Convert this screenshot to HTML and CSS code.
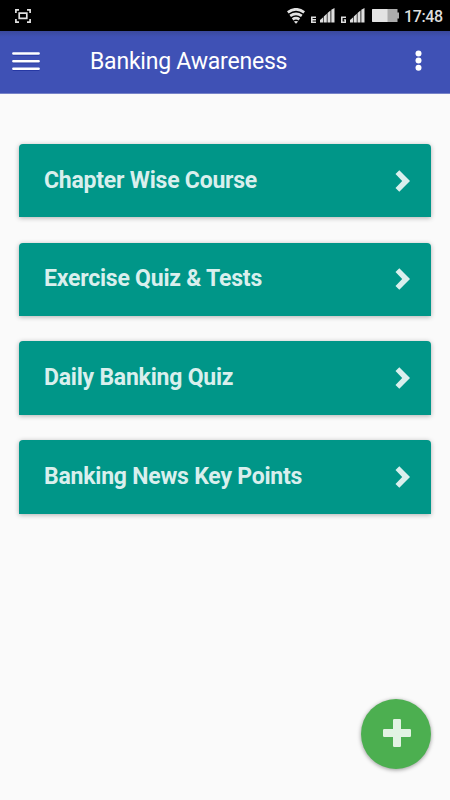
FILE: index.html
```html
<!DOCTYPE html>
<html lang="en">
<head>
<meta charset="utf-8">
<title>Banking Awareness</title>
<link rel="stylesheet" href="styles.css">
</head>
<body>
<div class="status">
  <svg class="shot" width="16" height="14" viewBox="0 0 16 14" fill="none" stroke="#e2e2e2" stroke-width="1.700"><path d="M.9 4V.9H4M12 .9h3.1V4M.9 10v3.1H4M12 13.100h3.100V10"/><path d="M4.200 4.200h7.600v5.200H4.200z"/></svg>
  <svg class="wifi" width="18" height="16" viewBox="0 0 18 16" fill="none" stroke="#e2e2e2" stroke-width="2.700"><path d="M.8 4.300Q9-1.700 17.200 4.300M3.200 7.800q5.800-4 11.600 0M5.600 11.300q3.400-2.300 6.800 0"/><path d="M6.800 13.600q2.200-1.300 4.400 0L9 15.800z" fill="#e2e2e2" stroke="none"/></svg>
  <svg class="signal" width="24" height="15" viewBox="0 0 24 15" fill="#dedede"><path d="M0 8.500h5V10H1.600v1.100H5v1.400H1.600v1.100H5V15H0z"/><path d="M9 14.500V12l3.200-2.800v5.300zM12.800 14.500V8.400l3-2.600v8.700zM16.500 14.500V5l3-2.600v12.100zM20.300 14.500V1.800L23.500 0v14.500z"/></svg>
  <svg class="signal" width="24" height="15" viewBox="0 0 24 15" fill="#dedede"><path d="M0 8.500h5V10H1.600v3.600h2v-1H2.800v-1.300H5V15H0z"/><path d="M9 14.500V12l3.200-2.800v5.300zM12.800 14.500V8.400l3-2.600v8.700zM16.500 14.500V5l3-2.600v12.100zM20.300 14.500V1.800L23.500 0v14.500z"/></svg>
  <svg class="battery" width="28" height="13" viewBox="0 0 28 13"><path fill="#acacac" d="M1 0h24.500v3.500H27v6h-1.500V13H1q-1 0-1-1V1q0-1 1-1z"/><path fill="#e3e3e3" d="M1 0h14.500v13H1q-1 0-1-1V1q0-1 1-1z"/></svg>
  <span class="clock">17:48</span>
</div>
<header class="bar">
  <svg class="menu" width="28" height="20" viewBox="0 0 28 20" stroke-width="2.400" stroke-linecap="round"><path stroke="#1f309f" d="M1.500 2.300h25M1.500 10h25M1.500 17.500h25"/><path stroke="#fff" d="M1.300 1.500h25.400M1.300 9.200h25.400M1.300 16.700h25.400"/></svg>
  <h1>Banking Awareness</h1>
  <svg class="more" width="7" height="22" viewBox="0 0 7 22" fill="#fff"><circle cx="3.500" cy="3.500" r="3"/><circle cx="3.500" cy="10.500" r="3"/><circle cx="3.500" cy="17.700" r="3"/></svg>
</header>
<main class="list">
  <div class="card"><span>Chapter Wise Course</span><svg class="arrow" viewBox="0 0 15 22"><path d="M4.300.3.500 4.100 7.200 11 .5 17.900l3.800 3.800L15 11z"/></svg></div>
  <div class="card"><span>Exercise Quiz &amp; Tests</span><svg class="arrow" viewBox="0 0 15 22"><path d="M4.300.3.500 4.100 7.200 11 .5 17.900l3.800 3.800L15 11z"/></svg></div>
  <div class="card"><span>Daily Banking Quiz</span><svg class="arrow" viewBox="0 0 15 22"><path d="M4.300.3.500 4.100 7.200 11 .5 17.900l3.800 3.800L15 11z"/></svg></div>
  <div class="card"><span>Banking News Key Points</span><svg class="arrow" viewBox="0 0 15 22"><path d="M4.300.3.500 4.100 7.200 11 .5 17.900l3.800 3.800L15 11z"/></svg></div>
</main>
<button class="fab" aria-label="Add"><svg width="28" height="28" viewBox="0 0 28 28" fill="#e2f3e3"><path d="M11.200 0h5.600q1.200 0 1.200 1.200V10h8.800q1.200 0 1.200 1.200v5.600q0 1.200-1.200 1.200H18v8.800q0 1.200-1.200 1.200h-5.600q-1.200 0-1.200-1.200V18H1.200Q0 18 0 16.800v-5.600Q0 10 1.200 10H10V1.200Q10 0 11.200 0z"/></svg></button>
</body>
</html>
```

FILE: styles.css
```css
* { box-sizing: border-box; }
body {
  margin: 0;
  height: 800px;
  overflow: hidden;
  background: #fafafa;
  font-family: Roboto, "Liberation Sans", sans-serif;
}
svg { display: block; flex: none; }
.status {
  display: flex;
  align-items: flex-start;
  height: 31px;
  padding: 8px 8px 0 15px;
  background: #000;
}
.shot { margin-top: 1px; }
.wifi { margin-left: auto; margin-right: 6px; }
.signal { margin-right: 6px; }
.battery { margin: 1px 4px 0 1px; }
.clock {
  width: 38px;
  color: #dedede;
  font-size: 16px;
  font-weight: 500;
  line-height: 17px;
  letter-spacing: -.400px;
  white-space: nowrap;
}
.bar {
  display: flex;
  align-items: center;
  height: 63px;
  padding: 0 28px 0 12px;
  background: linear-gradient(#3a489c, #3f51b5 6px);
  border-bottom: 1px solid #7783c8;
}
.menu { margin-bottom: 1px; }
.more { margin-bottom: 2px; }
.bar h1 {
  margin: 0 auto 0 50px;
  color: #fff;
  font-size: 23px;
  font-weight: 400;
  line-height: 28px;
  letter-spacing: -.220px;
  white-space: nowrap;
}
.list {
  display: grid;
  gap: 25.300px;
  padding: 49.800px 19px 0;
}
.card {
  display: flex;
  align-items: center;
  justify-content: space-between;
  height: 73.500px;
  padding: 0 21px 0 25px;
  background: #009688;
  border-radius: 4px 4px 0 0;
  box-shadow: 0 1px 5px rgba(0, 0, 0, .3);
  color: #d9efed;
  font-size: 23px;
  font-weight: 700;
  line-height: 28px;
  letter-spacing: -.220px;
  white-space: nowrap;
}
.arrow { width: 15px; height: 22px; fill: #d9efed; }
.fab {
  position: absolute;
  left: 361px;
  top: 699px;
  display: flex;
  align-items: center;
  justify-content: center;
  width: 70px;
  height: 70px;
  padding: 0 0 3px 2.600px;
  border: 0;
  border-radius: 50%;
  background: #4caf50;
  box-shadow: 0 1px 4px rgba(0, 0, 0, .4);
}
```
